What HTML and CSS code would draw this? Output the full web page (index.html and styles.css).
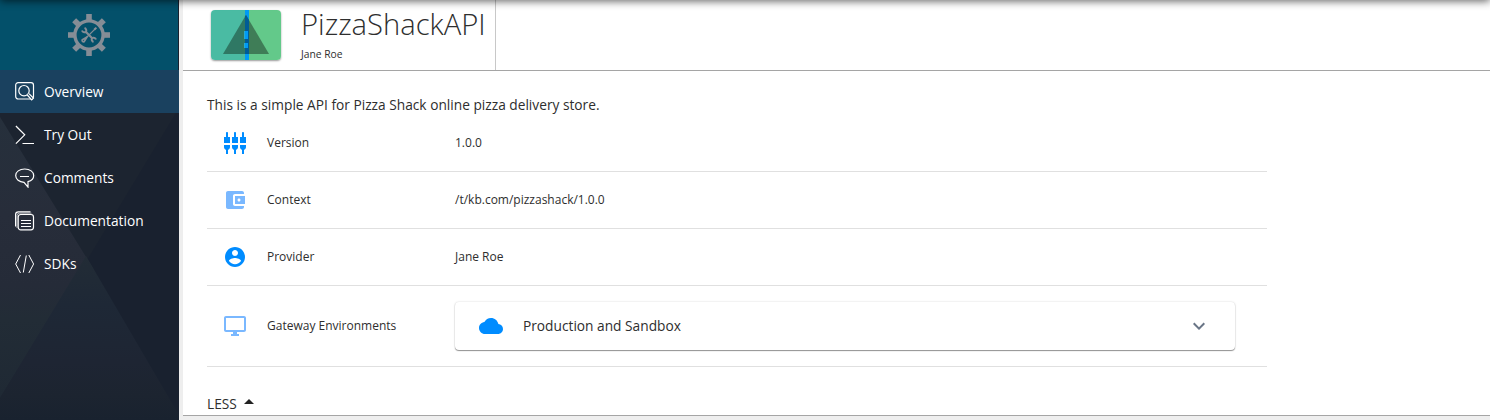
FILE: index.html
```html
<!DOCTYPE html>
<html lang="en">
<head>
<meta charset="utf-8">
<title>PizzaShackAPI</title>
<link rel="stylesheet" href="styles.css">
</head>
<body>
<div class="app">
  <nav class="sidebar">
    <svg class="sidebar-bg" viewBox="0 0 179 350" preserveAspectRatio="none" aria-hidden="true">
      <defs>
        <linearGradient id="facet" x1="0" y1="0" x2="0" y2="1">
          <stop offset="0" stop-color="#26303c"/><stop offset=".35" stop-color="#272d3a"/><stop offset=".6" stop-color="#252b38"/><stop offset=".72" stop-color="#222c36"/><stop offset="1" stop-color="#1f2934"/>
        </linearGradient>
        <linearGradient id="peak" x1="0" y1="0" x2="0" y2="1">
          <stop offset="0" stop-color="#222c36"/><stop offset=".3" stop-color="#1e2836"/><stop offset=".65" stop-color="#1e2533"/><stop offset=".85" stop-color="#1c2430"/><stop offset="1" stop-color="#19222f"/>
        </linearGradient>
      </defs>
      <path fill="#1c2430" d="M0 0H179V350H0z"/>
      <path fill="#19212f" d="M179 38L86 192L179 345z"/>
      <path fill="url(#facet)" d="M0 47L94 200L79 200L0 328z"/>
      <path fill="url(#peak)" d="M86 186L182 350H0V328z"/>
    </svg>
    <a class="brand" href="#">
      <svg width="42" height="42" viewBox="-21 -21 42 42">
        <g fill="#858d96">
          <path id="tooth" d="M-2.8 -21H2.8V-14H-2.8z"/>
          <use href="#tooth" transform="rotate(45)"/><use href="#tooth" transform="rotate(90)"/><use href="#tooth" transform="rotate(135)"/><use href="#tooth" transform="rotate(180)"/><use href="#tooth" transform="rotate(225)"/><use href="#tooth" transform="rotate(270)"/><use href="#tooth" transform="rotate(315)"/>
        </g>
        <circle r="14.1" fill="none" stroke="#858d96" stroke-width="3.4"/>
        <g fill="none" stroke="#858d96">
          <path stroke-width="2.2" d="M-3.3 -3.3L3.5 3.5"/>
          <path stroke-width="2" d="M-7 -4.5A2.7 2.7 0 0 0 -3 -3.2A2.7 2.7 0 0 0 -4.5 -7M7 4.5A2.7 2.7 0 0 0 3 3.2A2.7 2.7 0 0 0 4.5 7"/>
          <path stroke-width="1.2" d="M6.7 -6.7L-2 2"/>
          <path stroke-width="2" d="M5.2 -5.2L7.4 -7.4"/>
          <path stroke-width="1.7" d="M-2.4 2.2L-6.8 4.9A1.5 1.5 0 0 0 -4.9 6.8L-2.2 2.4z"/>
        </g>
      </svg>
    </a>
    <a class="nav-item active" href="#">
      <svg class="nav-icon" viewBox="0 0 20 20"><rect x=".7" y=".7" width="17.8" height="16.3" rx="2.5"/><circle cx="9" cy="8.7" r="5.2"/><path d="M12.3 13l4.400 4.800 1.700-1.700-4.500-4.500" fill="#1a415f"/></svg>
      <span>Overview</span></a>
    <a class="nav-item" href="#">
      <svg class="nav-icon" viewBox="0 0 20 20"><path d="M.9 1l8.800 8.800-8.800 8.900M7.500 18.500h11.500"/></svg>
      <span>Try Out</span></a>
    <a class="nav-item" href="#">
      <svg class="nav-icon" viewBox="0 0 20 20"><path d="M9.700 1c5.200 0 9 2.800 9 6.500 0 3.200-2.600 5.300-5.700 6.200v5.400l-4-4.800C4.200 14.100.7 11.300.7 7.500.7 3.800 4.500 1 9.700 1zM5 8.500h9"/></svg>
      <span>Comments</span></a>
    <a class="nav-item" href="#">
      <svg class="nav-icon" viewBox="0 0 20 20"><rect x="3.200" y="3.500" width="15.300" height="15.300" rx="2.500"/><path d="M.6 15.500V3.500Q.6.800 3.500.8H15.500M6 9.500h10M6 12.500h10M6 15.500h10"/><path class="fine" d="M2 17V4.500Q2 2.200 4.500 2.200H16.500"/></svg>
      <span>Documentation</span></a>
    <a class="nav-item" href="#">
      <svg class="nav-icon thin" viewBox="0 0 20 20"><path d="M5.500 1L.7 10l4.800 9M13.800 1L18.600 10l-4.800 9M11.300 1.500L8.300 18.500"/></svg>
      <span>SDKs</span></a>
  </nav>
  <main class="page">
    <header class="api-header">
      <div class="api-info">
        <svg class="api-thumb" width="70" height="50" viewBox="0 0 70 50">
          <path fill="#4abba3" d="M0 0h35v50H0z"/><path fill="#63c98a" d="M35 0h35v50H35z"/>
          <path fill="#009bf5" d="M34 0h4v50h-4z"/>
          <path fill="#2f7864" d="M35 5L12 44h23z"/><path fill="#3f7d57" d="M35 5l23 39H35z"/>
          <path fill="#005c96" d="M34 6.500L35 5l3 5v34h-4z"/>
          <path fill="#2aaad0" d="M33 21h3v8h-3zM33 33h3v5h-3z"/><path fill="#009bf5" d="M34 21h3v8h-3zM34 33h3v5h-3z"/>
        </svg>
        <div class="api-name"><h1>PizzaShackAPI</h1><p>Jane Roe</p></div>
      </div>
    </header>
    <section class="overview">
      <p class="description">This is a simple API for Pizza Shack online pizza delivery store.</p>
      <div class="details">
        <div class="row">
          <svg class="row-icon" viewBox="0 0 24 24"><path d="M5 2c0-.55-.45-1-1-1s-1 .45-1 1v4H1v6h6V6H5V2zm4 14c0 1.300.840 2.400 2 2.820V23h2v-4.180c1.160-.41 2-1.510 2-2.820v-2H9v2zm-8 0c0 1.300.840 2.400 2 2.820V23h2v-4.180C6.160 18.400 7 17.300 7 16v-2H1v2zM21 6V2c0-.55-.45-1-1-1s-1 .45-1 1v4h-2v6h6V6h-2zm-8-4c0-.55-.45-1-1-1s-1 .45-1 1v4H9v6h6V6h-2V2zm4 14c0 1.300.840 2.400 2 2.820V23h2v-4.180c1.160-.41 2-1.510 2-2.820v-2h-6v2z"/></svg>
          <span class="label">Version</span><span class="value">1.0.0</span>
        </div>
        <div class="row">
          <svg class="row-icon light" viewBox="0 0 24 24"><path d="M21 18v1c0 1.100-.9 2-2 2H5c-1.110 0-2-.9-2-2V5c0-1.100.890-2 2-2h14c1.100 0 2 .9 2 2v1h-9c-1.110 0-2 .9-2 2v8c0 1.100.890 2 2 2h9zm-9-2h10V8H12v8zm4-2.500c-.83 0-1.500-.67-1.500-1.500s.67-1.500 1.500-1.500 1.500.67 1.500 1.500-.67 1.500-1.500 1.500z"/></svg>
          <span class="label">Context</span><span class="value">/t/kb.com/pizzashack/1.0.0</span>
        </div>
        <div class="row">
          <svg class="row-icon" viewBox="0 0 24 24"><path d="M12 2C6.480 2 2 6.480 2 12s4.480 10 10 10 10-4.480 10-10S17.520 2 12 2zm0 3c1.660 0 3 1.340 3 3s-1.340 3-3 3-3-1.340-3-3 1.340-3 3-3zm0 14.200c-2.500 0-4.710-1.280-6-3.220.03-1.990 4-3.080 6-3.080 1.990 0 5.970 1.090 6 3.080-1.290 1.940-3.500 3.220-6 3.220z"/></svg>
          <span class="label">Provider</span><span class="value">Jane Roe</span>
        </div>
        <div class="row gateway">
          <svg class="row-icon light" viewBox="0 0 24 24"><path d="M21 2H3c-1.100 0-2 .9-2 2v12c0 1.100.9 2 2 2h7v2H8v2h8v-2h-2v-2h7c1.100 0 2-.9 2-2V4c0-1.100-.9-2-2-2zm0 14H3V4h18v12z"/></svg>
          <span class="label">Gateway Environments</span>
          <div class="panel">
            <svg class="cloud" viewBox="0 0 24 24"><path d="M19.350 10.040C18.670 6.590 15.640 4 12 4 9.110 4 6.600 5.640 5.350 8.040 2.340 8.360 0 10.910 0 14c0 3.310 2.690 6 6 6h13c2.760 0 5-2.240 5-5 0-2.640-2.050-4.780-4.650-4.960z"/></svg>
            <span class="value">Production and Sandbox</span>
            <svg class="chevron" viewBox="0 0 24 24"><path d="M16.590 8.590L12 13.170 7.410 8.590 6 10l6 6 6-6z"/></svg>
          </div>
        </div>
      </div>
      <a class="less" href="#">LESS <svg width="10" height="5" viewBox="0 0 10 5"><path d="M0 5l5-5 5 5z"/></svg></a>
    </section>
  </main>
  <div class="top-shadow"></div>
</div>
</body>
</html>
```
FILE: styles.css
```css
* { box-sizing: border-box; }
body { margin: 0; background: #eee; color: #2e2e2e; font: 12px "Open Sans", "Noto Sans", sans-serif; }
h1, p { margin: 0; }
a { color: inherit; text-decoration: none; }
svg { display: block; flex: none; }
.app { position: relative; display: flex; gap: 4px; height: 420px; overflow: hidden; }

.sidebar { position: relative; width: 179px; flex: none; background: #18202e; }
.sidebar-bg { position: absolute; left: 0; top: 70px; width: 179px; height: 350px; }
.brand { position: relative; display: flex; height: 70px; justify-content: center; align-items: center; margin-right: 1px; background: #03506a; }
.nav-item { position: relative; display: flex; align-items: center; height: 43px; padding-left: 15px; gap: 9px; color: #fff; font-size: 13.72px; }
.nav-item.active { background: #1a415f; }
.nav-icon { width: 20px; height: 20px; fill: none; stroke: #fff; stroke-width: 1.2; }
.nav-icon.thin { stroke-width: 1; }
.nav-icon .fine { stroke-width: .6; }

.page { flex: 1; height: 416px; background: #fff; border-bottom: 1px solid #a5a5a5; }
.api-header { display: flex; height: 71px; border-bottom: 1px solid #a5a5a5; }
.api-info { display: flex; width: 313px; padding: 10px 0 0 28px; gap: 20px; border-right: 1px solid #c8c8c8; }
.api-thumb { border-radius: 4px; box-shadow: 0 1px 2px rgba(0, 0, 0, .4); }
.api-name h1 { margin: -7px 0 1px; font-size: 29.2px; font-weight: 300; line-height: 42px; white-space: nowrap; }
.api-name p { font-size: 10.3px; line-height: 16px; }

.overview { padding: 24px 24px 0; }
.description { font-size: 13.72px; line-height: 20px; }
.details { width: 1060px; }
.row { display: grid; grid-template-columns: 44px 188px 780px; align-items: center; height: 57px; padding-left: 16px; border-bottom: 1px solid #e0e0e0; }
.row-icon { width: 24px; height: 24px; fill: #008cff; }
.row-icon.light { fill: #7ab8ff; }
.label, .value { padding-bottom: 2px; }
.gateway { height: 81px; }
.panel { display: flex; align-items: center; height: 48px; padding: 0 24px; gap: 20px; font-size: 13.72px; border-radius: 4px; background: #fff; box-shadow: 0 1px 1px rgba(0, 0, 0, .4), 0 0 2px rgba(0, 0, 0, .18); }
.cloud { width: 24px; height: 24px; fill: #008cff; }
.chevron { width: 24px; height: 24px; margin-left: auto; fill: #697586; }
.less { display: flex; align-items: center; gap: 7px; height: 20px; margin-top: 26px; font-size: 13.72px; }
.less svg { margin-bottom: 3px; fill: #222; }
.top-shadow { position: absolute; left: 0; right: 0; top: -10px; height: 10px; background: #222; box-shadow: 0 1px 9px rgba(0, 0, 0, .65); }
```
